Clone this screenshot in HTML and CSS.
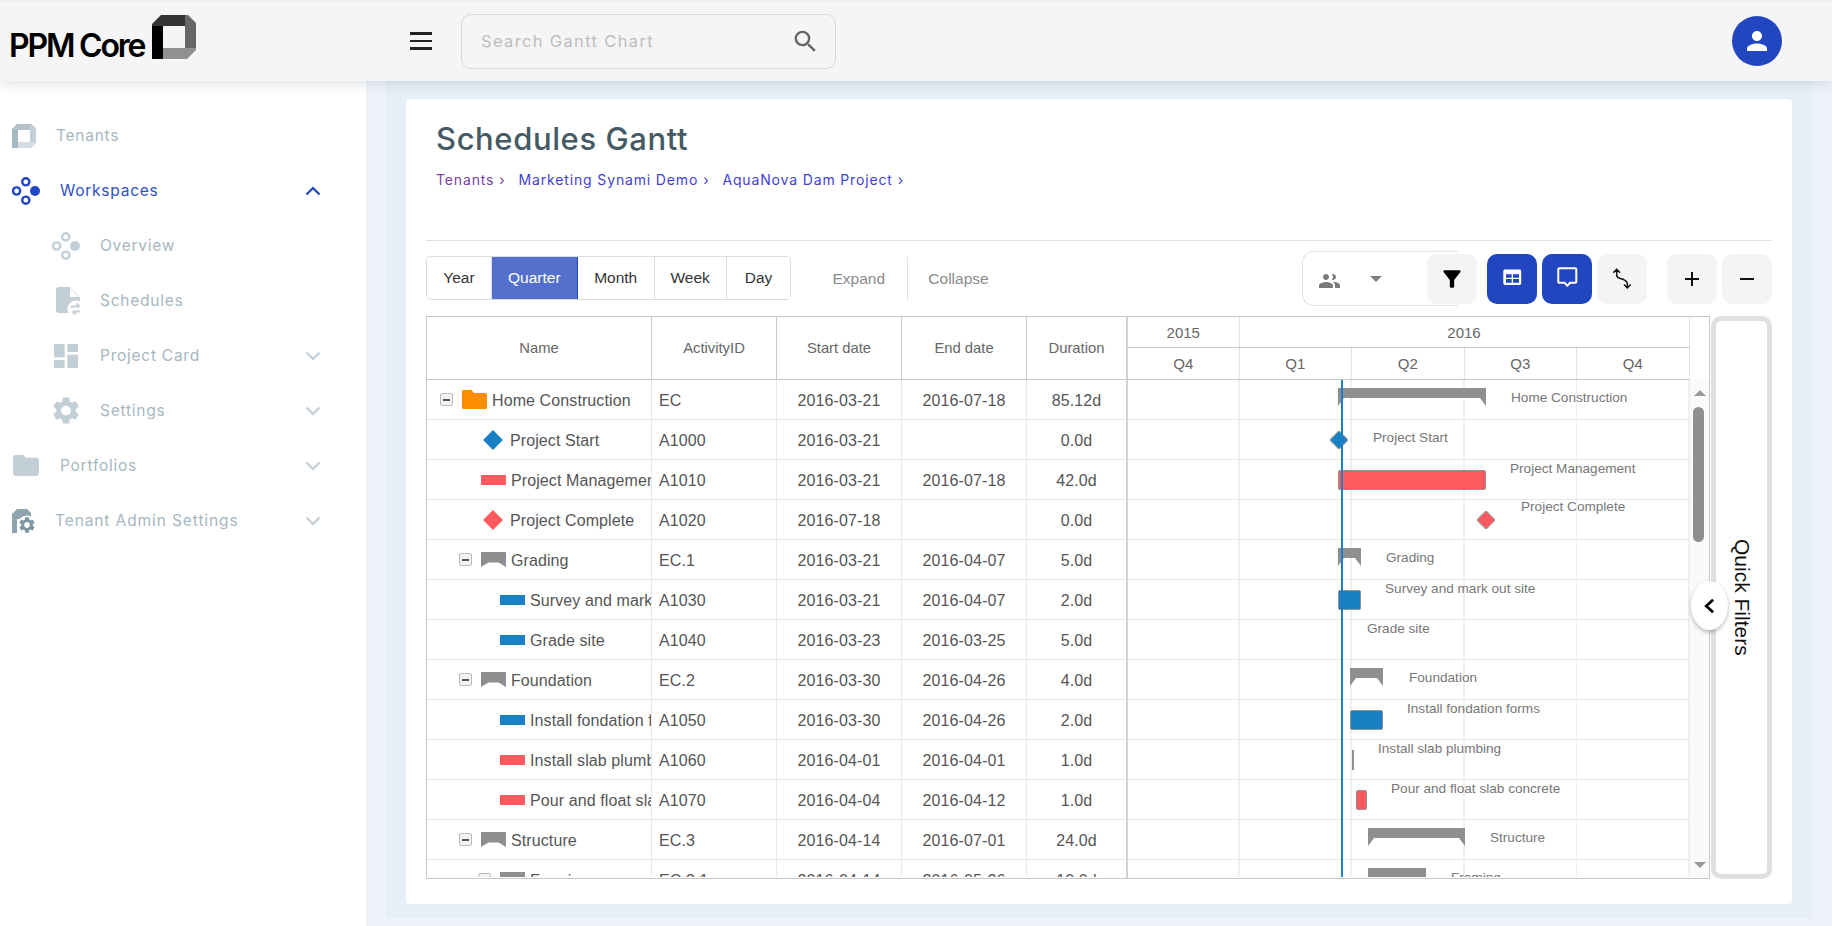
FILE: index.html
```html
<!DOCTYPE html>
<html lang="en">
<head>
<meta charset="UTF-8">
<meta name="viewport" content="width=device-width, initial-scale=1.0">
<title>Schedules Gantt</title>
<link rel="stylesheet" href="styles.css">
</head>
<body>
<header class="topbar">
  <a class="logo">
    <span class="logo-text">PPM Core</span>
    <svg class="logo-mark" viewBox="0 0 44 44">
      <polygon points="0,11 11,11 11,44 0,44" fill="#000"/>
      <polygon points="0,11 0,9 9,0 33,0 33,11" fill="#333"/>
      <polygon points="33,0 36,0 44,8 44,33 33,33" fill="#666"/>
      <polygon points="11,33 44,33 44,35 35,44 11,44" fill="#919191"/>
    </svg>
  </a>
  <button class="hamburger"><span></span><span></span><span></span></button>
  <div class="search">
    <span class="search-text">Search Gantt Chart</span>
    <svg class="search-icon" viewBox="0 0 24 24"><path d="M15.5 14h-.79l-.28-.27A6.471 6.471 0 0 0 16 9.5 6.5 6.5 0 1 0 9.5 16c1.61 0 3.09-.59 4.23-1.57l.27.28v.79l5 4.99L20.49 19l-4.99-5zm-6 0C7.01 14 5 11.99 5 9.5S7.01 5 9.5 5 14 7.01 14 9.5 11.99 14 9.5 14z"/></svg>
  </div>
  <div class="avatar">
    <svg viewBox="0 0 24 24"><path d="M12 12c2.21 0 4-1.79 4-4s-1.79-4-4-4-4 1.79-4 4 1.79 4 4 4zm0 2c-2.67 0-8 1.34-8 4v2h16v-2c0-2.66-5.33-4-8-4z"/></svg>
  </div>
</header>

<div class="layout">
  <aside class="sidebar">
    <div class="nav-item">
      <svg class="nav-icon ic-tenant" viewBox="0 0 44 44">
        <polygon points="0,11 11,11 11,44 0,44" fill="#a5b8c2"/>
        <polygon points="0,11 0,9 9,0 33,0 33,11" fill="#b3c2ca"/>
        <polygon points="33,0 36,0 44,8 44,33 33,33" fill="#c3cfd6"/>
        <polygon points="11,33 44,33 44,35 35,44 11,44" fill="#d4dde1"/>
      </svg>
      <span class="nav-label">Tenants</span>
    </div>
    <div class="nav-item active">
      <svg class="nav-icon ic-work" viewBox="0 0 28 28">
        <g fill="none" stroke="currentColor" stroke-width="2.4"><circle cx="13.8" cy="4.8" r="3.6"/><circle cx="4.6" cy="14" r="3.6"/><circle cx="13.8" cy="23.2" r="3.6"/></g>
        <circle cx="23" cy="14" r="5" fill="currentColor"/>
      </svg>
      <span class="nav-label">Workspaces</span>
      <svg class="chevron" viewBox="0 0 16 10"><path d="M1.5 8.5 8 2l6.5 6.5"/></svg>
    </div>
    <div class="nav-item sub">
      <svg class="nav-icon ic-work" viewBox="0 0 28 28">
        <g fill="none" stroke="currentColor" stroke-width="2.4"><circle cx="13.8" cy="4.8" r="3.6"/><circle cx="4.6" cy="14" r="3.6"/><circle cx="13.8" cy="23.2" r="3.6"/></g>
        <circle cx="23" cy="14" r="5" fill="currentColor"/>
      </svg>
      <span class="nav-label">Overview</span>
    </div>
    <div class="nav-item sub">
      <svg class="nav-icon ic-sched" viewBox="0 0 24 28">
        <path fill="currentColor" d="M13.5 0H3C1.4 0 0 1.3 0 3v20c0 1.7 1.3 3 3 3h18c1.7 0 3-1.3 3-3V10.5L13.5 0z"/>
        <polygon fill="#fff" points="14,1 14,10 23,10"/>
        <circle cx="20" cy="22" r="8.5" fill="#fff"/>
        <path fill="none" stroke="currentColor" stroke-width="1.8" d="M14.5 19.5h9M20.5 16.5l3 3M25.5 24.5h-9M19.5 27.5l-3-3"/>
      </svg>
      <span class="nav-label">Schedules</span>
    </div>
    <div class="nav-item sub">
      <svg class="nav-icon ic-card" viewBox="3 3 18 18"><path fill="currentColor" d="M3 13h8V3H3v10zm0 8h8v-6H3v6zm10 0h8V11h-8v10zm0-18v6h8V3h-8z"/></svg>
      <span class="nav-label">Project Card</span>
      <svg class="chevron" viewBox="0 0 16 10"><path d="M1.5 1.5 8 8l6.5-6.5"/></svg>
    </div>
    <div class="nav-item sub">
      <svg class="nav-icon ic-gear" viewBox="2.5 2 19 20"><path fill="currentColor" d="M19.14 12.94c.04-.3.06-.61.06-.94 0-.32-.02-.64-.07-.94l2.03-1.58c.18-.14.23-.41.12-.61l-1.92-3.32c-.12-.22-.37-.29-.59-.22l-2.39.96c-.5-.38-1.03-.7-1.62-.94l-.36-2.54c-.04-.24-.24-.41-.48-.41h-3.84c-.24 0-.43.17-.47.41l-.36 2.54c-.59.24-1.13.57-1.62.94l-2.39-.96c-.22-.08-.47 0-.59.22L2.74 8.87c-.12.21-.08.47.12.61l2.03 1.58c-.05.3-.09.63-.09.94s.02.64.07.94l-2.03 1.58c-.18.14-.23.41-.12.61l1.92 3.32c.12.22.37.29.59.22l2.39-.96c.5.38 1.03.7 1.62.94l.36 2.54c.05.24.24.41.48.41h3.84c.24 0 .44-.17.47-.41l.36-2.54c.59-.24 1.13-.56 1.62-.94l2.39.96c.22.08.47 0 .59-.22l1.92-3.32c.12-.22.07-.47-.12-.61l-2.01-1.58zM12 15.6c-1.98 0-3.6-1.62-3.6-3.6s1.62-3.6 3.6-3.6 3.6 1.62 3.6 3.6-1.62 3.6-3.6 3.6z"/></svg>
      <span class="nav-label">Settings</span>
      <svg class="chevron" viewBox="0 0 16 10"><path d="M1.5 1.5 8 8l6.5-6.5"/></svg>
    </div>
    <div class="nav-item">
      <svg class="nav-icon ic-folder" viewBox="2 4 20 16"><path fill="currentColor" d="M10 4H4c-1.1 0-1.99.9-1.99 2L2 18c0 1.1.9 2 2 2h16c1.1 0 2-.9 2-2V8c0-1.1-.9-2-2-2h-8l-2-2z"/></svg>
      <span class="nav-label">Portfolios</span>
      <svg class="chevron" viewBox="0 0 16 10"><path d="M1.5 1.5 8 8l6.5-6.5"/></svg>
    </div>
    <div class="nav-item">
      <svg class="nav-icon ic-admin" viewBox="0 0 24 24">
        <path fill="#8fa4af" d="M0 5 5 0h10l4 4v6H5v14H0z"/>
        <circle cx="15" cy="16" r="9.5" fill="#fff"/>
        <g transform="translate(5.4 6.4) scale(.8)"><path fill="#7f96a2" d="M19.14 12.94c.04-.3.06-.61.06-.94 0-.32-.02-.64-.07-.94l2.03-1.58c.18-.14.23-.41.12-.61l-1.92-3.32c-.12-.22-.37-.29-.59-.22l-2.39.96c-.5-.38-1.03-.7-1.62-.94l-.36-2.54c-.04-.24-.24-.41-.48-.41h-3.84c-.24 0-.43.17-.47.41l-.36 2.54c-.59.24-1.13.57-1.62.94l-2.39-.96c-.22-.08-.47 0-.59.22L2.74 8.87c-.12.21-.08.47.12.61l2.03 1.58c-.05.3-.09.63-.09.94s.02.64.07.94l-2.03 1.58c-.18.14-.23.41-.12.61l1.92 3.32c.12.22.37.29.59.22l2.39-.96c.5.38 1.03.7 1.62.94l.36 2.54c.05.24.24.41.48.41h3.84c.24 0 .44-.17.47-.41l.36-2.54c.59-.24 1.13-.56 1.62-.94l2.39.96c.22.08.47 0 .59-.22l1.92-3.32c.12-.22.07-.47-.12-.61l-2.01-1.58zM12 15.6c-1.98 0-3.6-1.62-3.6-3.6s1.62-3.6 3.6-3.6 3.6 1.62 3.6 3.6-1.62 3.6-3.6 3.6z"/></g>
      </svg>
      <span class="nav-label nav-admin">Tenant Admin Settings</span>
      <svg class="chevron" viewBox="0 0 16 10"><path d="M1.5 1.5 8 8l6.5-6.5"/></svg>
    </div>
  </aside>

  <main class="main">
    <div class="main-inner">
      <section class="card">
        <div class="page-head">
          <h1>Schedules Gantt</h1>
          <nav class="crumbs">
            <a class="first">Tenants<i>›</i></a>
            <a>Marketing Synami Demo<i>›</i></a>
            <a>AquaNova Dam Project<i>›</i></a>
          </nav>
        </div>

        <div class="toolbar">
          <div class="scales">
            <button class="s-year">Year</button>
            <button class="s-quarter on">Quarter</button>
            <button class="s-month">Month</button>
            <button class="s-week">Week</button>
            <button class="s-day">Day</button>
          </div>
          <button class="plain expand">Expand</button>
          <button class="plain collapse">Collapse</button>

          <div class="res-select">
            <svg class="people" viewBox="0 0 24 24"><path d="M16 11c1.66 0 2.99-1.34 2.99-3S17.66 5 16 5c-.4 0-.8.08-1.15.23.7.75 1.15 1.69 1.15 2.77s-.45 2.02-1.15 2.77c.35.15.75.23 1.15.23zm-7 0c1.66 0 3-1.34 3-3S10.66 5 9 5 6 6.34 6 8s1.34 3 3 3zm0 2c-2.33 0-7 1.17-7 3.5V19h14v-2.5C16 14.17 11.33 13 9 13zm8 0c-.29 0-.62.02-.97.05 1.16.84 1.97 1.97 1.97 3.45V19h5v-2.5c0-2.33-3.67-3.5-6-3.5z"/></svg>
            <span class="caret"></span>
          </div>
          <button class="tool filter">
            <svg viewBox="0 0 24 24"><path d="M4.25 5.61C6.27 8.2 10 13 10 13v6c0 .55.45 1 1 1h2c.55 0 1-.45 1-1v-6s3.72-4.8 5.74-7.39c.51-.66.04-1.61-.79-1.61H5.04c-.83 0-1.3.95-.79 1.61z"/></svg>
          </button>
          <button class="tool blue">
            <svg viewBox="0 0 24 24"><path fill-rule="evenodd" d="M5 2.5h14.5c1 0 1.7.7 1.7 1.7v12c0 1-.7 1.7-1.7 1.7H5c-1 0-1.7-.7-1.7-1.7v-12C3.3 3.2 4 2.5 5 2.500zM6 7.300v3.400h5.700V7.300H6zM13 7.300v3.400h6V7.300h-6zM6 12v3.700h5.700V12H6zM13 12v3.700h6V12h-6z"/></svg>
          </button>
          <button class="tool blue">
            <svg viewBox="0 0 24 24"><path fill="none" stroke="#fff" stroke-width="2" stroke-linejoin="round" d="M4.3 1.3h16c.6 0 1 .4 1 1v12.5c0 .6-.4 1-1 1h-5.500l-2.500 3-2.500-3H4.300c-.6 0-1-.4-1-1V2.300c0-.6.4-1 1-1z"/></svg>
          </button>
          <button class="tool link">
            <svg viewBox="0 0 24 24"><path fill="none" stroke="#111" stroke-width="1.5" d="M3.3 5.700 6.700 2.300l3.400 3.400M6.700 2.300V8c0 2 1.500 3 3.500 3.500 2 .3 3.500.8 5 2 1.300 1 2.100 1.500 2.100 2.500v4.900M14 17.500l3.300 3.400 3.400-3.400"/></svg>
          </button>
          <button class="tool plus">
            <svg viewBox="0 0 24 24"><path fill="none" stroke="#111" stroke-width="2" d="M12 5v14M5 12h14"/></svg>
          </button>
          <button class="tool minus">
            <svg viewBox="0 0 24 24"><path fill="none" stroke="#111" stroke-width="2" d="M5 12h14"/></svg>
          </button>
        </div>

        <div class="chart-wrap">
          <div class="gantt">
            <div class="grid-pane">
              <div class="g-row g-head">
                <div class="c c-name">Name</div>
                <div class="c c-id">ActivityID</div>
                <div class="c c-date">Start date</div>
                <div class="c c-date">End date</div>
                <div class="c c-dur">Duration</div>
              </div>
              <div class="g-body">
                <div class="g-row">
                  <div class="c c-name lv0"><span class="tog"><i></i></span><svg class="ic-f" viewBox="0 0 25 19"><path d="M1.5 0h8L12 3h11.500c.8 0 1.500.7 1.500 1.500v13c0 .8-.7 1.500-1.500 1.500h-22C.7 19 0 18.300 0 17.500v-16C0 .7.7 0 1.500 0z"/></svg><span class="t">Home Construction</span></div>
                  <div class="c c-id">EC</div><div class="c c-date">2016-03-21</div><div class="c c-date">2016-07-18</div><div class="c c-dur">85.12d</div>
                </div>
                <div class="g-row">
                  <div class="c c-name lv1"><span class="tog none"></span><span class="dia blue-d"></span><span class="t">Project Start</span></div>
                  <div class="c c-id">A1000</div><div class="c c-date">2016-03-21</div><div class="c c-date"></div><div class="c c-dur">0.0d</div>
                </div>
                <div class="g-row">
                  <div class="c c-name lv1"><span class="tog none"></span><span class="bar-i red-b"></span><span class="t">Project Management</span></div>
                  <div class="c c-id">A1010</div><div class="c c-date">2016-03-21</div><div class="c c-date">2016-07-18</div><div class="c c-dur">42.0d</div>
                </div>
                <div class="g-row">
                  <div class="c c-name lv1"><span class="tog none"></span><span class="dia red-d"></span><span class="t">Project Complete</span></div>
                  <div class="c c-id">A1020</div><div class="c c-date">2016-07-18</div><div class="c c-date"></div><div class="c c-dur">0.0d</div>
                </div>
                <div class="g-row">
                  <div class="c c-name lv1"><span class="tog"><i></i></span><span class="sum-i"></span><span class="t">Grading</span></div>
                  <div class="c c-id">EC.1</div><div class="c c-date">2016-03-21</div><div class="c c-date">2016-04-07</div><div class="c c-dur">5.0d</div>
                </div>
                <div class="g-row">
                  <div class="c c-name lv2"><span class="tog none"></span><span class="bar-i blue-b"></span><span class="t">Survey and mark out site</span></div>
                  <div class="c c-id">A1030</div><div class="c c-date">2016-03-21</div><div class="c c-date">2016-04-07</div><div class="c c-dur">2.0d</div>
                </div>
                <div class="g-row">
                  <div class="c c-name lv2"><span class="tog none"></span><span class="bar-i blue-b"></span><span class="t">Grade site</span></div>
                  <div class="c c-id">A1040</div><div class="c c-date">2016-03-23</div><div class="c c-date">2016-03-25</div><div class="c c-dur">5.0d</div>
                </div>
                <div class="g-row">
                  <div class="c c-name lv1"><span class="tog"><i></i></span><span class="sum-i"></span><span class="t">Foundation</span></div>
                  <div class="c c-id">EC.2</div><div class="c c-date">2016-03-30</div><div class="c c-date">2016-04-26</div><div class="c c-dur">4.0d</div>
                </div>
                <div class="g-row">
                  <div class="c c-name lv2"><span class="tog none"></span><span class="bar-i blue-b"></span><span class="t">Install fondation forms</span></div>
                  <div class="c c-id">A1050</div><div class="c c-date">2016-03-30</div><div class="c c-date">2016-04-26</div><div class="c c-dur">2.0d</div>
                </div>
                <div class="g-row">
                  <div class="c c-name lv2"><span class="tog none"></span><span class="bar-i red-b"></span><span class="t">Install slab plumbing</span></div>
                  <div class="c c-id">A1060</div><div class="c c-date">2016-04-01</div><div class="c c-date">2016-04-01</div><div class="c c-dur">1.0d</div>
                </div>
                <div class="g-row">
                  <div class="c c-name lv2"><span class="tog none"></span><span class="bar-i red-b"></span><span class="t">Pour and float slab concrete</span></div>
                  <div class="c c-id">A1070</div><div class="c c-date">2016-04-04</div><div class="c c-date">2016-04-12</div><div class="c c-dur">1.0d</div>
                </div>
                <div class="g-row">
                  <div class="c c-name lv1"><span class="tog"><i></i></span><span class="sum-i"></span><span class="t">Structure</span></div>
                  <div class="c c-id">EC.3</div><div class="c c-date">2016-04-14</div><div class="c c-date">2016-07-01</div><div class="c c-dur">24.0d</div>
                </div>
                <div class="g-row">
                  <div class="c c-name lv2"><span class="tog"><i></i></span><span class="sum-i"></span><span class="t">Framing</span></div>
                  <div class="c c-id">EC.3.1</div><div class="c c-date">2016-04-14</div><div class="c c-date">2016-05-26</div><div class="c c-dur">10.0d</div>
                </div>
              </div>
            </div>

            <div class="time-pane">
              <div class="t-head">
                <div class="t-years">
                  <div class="t-cell w-first">2015</div>
                  <div class="t-cell w-year">2016</div>
                </div>
                <div class="t-quarters">
                  <div class="t-cell w-first">Q4</div>
                  <div class="t-cell w-q">Q1</div>
                  <div class="t-cell w-q">Q2</div>
                  <div class="t-cell w-q">Q3</div>
                  <div class="t-cell w-q">Q4</div>
                </div>
              </div>
              <div class="t-body">
                <div class="canvas">
                  <div class="sum" style="left:210px;top:8px;width:148px"></div>
                  <div class="ms blue-d" style="left:201px;top:50px"></div>
                  <div class="task red-b" style="left:210px;top:90px;width:148px"></div>
                  <div class="ms red-d" style="left:348px;top:130px"></div>
                  <div class="sum" style="left:210px;top:168px;width:23px"></div>
                  <div class="task blue-b" style="left:210px;top:210px;width:23px"></div>
                  <div class="sum" style="left:222px;top:288px;width:33px"></div>
                  <div class="task blue-b" style="left:222px;top:330px;width:33px"></div>
                  <div class="task zero" style="left:224px;top:370px;width:2px"></div>
                  <div class="task red-b" style="left:228px;top:410px;width:11px"></div>
                  <div class="sum" style="left:240px;top:448px;width:97px"></div>
                  <div class="sum" style="left:240px;top:488px;width:58px"></div>

                  <div class="today"></div>

                  <span class="lbl" style="left:383px;top:9px">Home Construction</span>
                  <span class="lbl" style="left:245px;top:49px">Project Start</span>
                  <span class="lbl" style="left:382px;top:80px">Project Management</span>
                  <span class="lbl" style="left:393px;top:118px">Project Complete</span>
                  <span class="lbl" style="left:258px;top:169px">Grading</span>
                  <span class="lbl" style="left:257px;top:200px">Survey and mark out site</span>
                  <span class="lbl" style="left:239px;top:240px">Grade site</span>
                  <span class="lbl" style="left:281px;top:289px">Foundation</span>
                  <span class="lbl" style="left:279px;top:320px">Install fondation forms</span>
                  <span class="lbl" style="left:250px;top:360px">Install slab plumbing</span>
                  <span class="lbl" style="left:263px;top:400px">Pour and float slab concrete</span>
                  <span class="lbl" style="left:362px;top:449px">Structure</span>
                  <span class="lbl" style="left:323px;top:489px">Framing</span>
                </div>
                <div class="vscroll">
                  <span class="arr up"></span>
                  <span class="thumb"></span>
                  <span class="arr down"></span>
                </div>
              </div>
            </div>
          </div>

          <div class="quick"><span>Quick Filters</span></div>
          <button class="collapse-btn">
            <svg viewBox="0 0 16 16"><path fill="none" stroke="#000" stroke-width="2.2" d="M10.5 3 5 8l5.5 5"/></svg>
          </button>
        </div>
      </section>
    </div>
  </main>
</div>
</body>
</html>
```

FILE: styles.css
```css
* {
  box-sizing: border-box;
}

body, html {
  height: 100%;
  margin: 0;
  overflow: hidden;
}

body {
  display: flex;
  flex-direction: column;
  font-family: "Inter", "Liberation Sans", sans-serif;
  background: #fff;
}

button {
  font: inherit;
  border: 0;
  background: none;
  padding: 0;
  cursor: pointer;
}

/* top bar */
.topbar {
  height: 81px;
  flex: none;
  display: flex;
  align-items: center;
  background: #f5f5f5;
  border-top: 1px solid #eee;
  box-shadow: 0 2px 12px rgba(60, 80, 100, 0.18);
  position: relative;
  z-index: 5;
}

.logo {
  width: 410px;
  padding-left: 9px;
  display: flex;
  align-items: flex-start;
  align-self: flex-start;
}

.logo-text {
  font-size: 32px;
  font-weight: 600;
  color: #000;
  letter-spacing: -2.2px;
  line-height: 38px;
  margin-top: 26px;
  width: 143px;
}

.logo-mark {
  width: 44px;
  height: 44px;
  margin-top: 14px;
}

.hamburger {
  width: 22px;
  display: flex;
  flex-direction: column;
  gap: 5px;
  margin-right: 29px;
}

.hamburger span {
  height: 2.5px;
  background: #222;
}

.search {
  width: 375px;
  height: 55px;
  border: 1px solid #d3d8dc;
  border-radius: 10px;
  display: flex;
  align-items: center;
  justify-content: space-between;
  padding: 0 15px 0 19px;
}

.search-text {
  font-size: 16.5px;
  color: #bdbdbd;
  letter-spacing: 1.35px;
}

.search-icon {
  width: 29px;
  height: 29px;
  fill: #666;
}

.avatar {
  width: 50px;
  height: 50px;
  border-radius: 50%;
  background: #2146c0;
  margin-left: auto;
  margin-right: 50px;
  display: flex;
  align-items: center;
  justify-content: center;
}

.avatar svg {
  width: 30px;
  height: 30px;
  fill: #fff;
}

/* side nav */
.layout {
  flex: 1;
  display: flex;
  min-height: 0;
}

.sidebar {
  width: 366px;
  flex: none;
  background: #fff;
  padding-top: 27px;
}

.nav-item {
  height: 55px;
  display: flex;
  align-items: center;
  padding-left: 12px;
  color: #c3cfd6;
  position: relative;
}

.nav-item.sub {
  padding-left: 52px;
}

.nav-item.active {
  color: #2146c0;
}

.nav-label {
  font-size: 15.5px;
  color: #a6b7c1;
  letter-spacing: 0.75px;
  margin-left: 20px;
}

.active .nav-label {
  color: #2f51c6;
}

.nav-admin {
  margin-left: 19px;
  letter-spacing: 0.9px;
}

.nav-icon {
  flex: none;
}

.ic-tenant {
  width: 24px;
  height: 24px;
}

.ic-work {
  width: 28px;
  height: 28px;
}

.ic-sched {
  width: 24px;
  height: 28px;
  margin-left: 4px;
}

.ic-card {
  width: 24px;
  height: 24px;
  margin-left: 2px;
  margin-right: 2px;
}

.ic-gear {
  width: 26px;
  height: 27px;
  margin-left: 1px;
  margin-right: 1px;
}

.ic-folder {
  width: 26px;
  height: 21px;
  margin-left: 1px;
  margin-right: 1px;
}

.ic-admin {
  width: 24px;
  height: 24px;
}

.chevron {
  position: absolute;
  left: 305px;
  top: 23px;
  width: 16px;
  height: 10px;
  fill: none;
  stroke: #c3cfd6;
  stroke-width: 2.2;
}

.active .chevron {
  stroke: #2146c0;
}

/* page area */
.main {
  flex: 1;
  min-width: 0;
  background: #eef3f9;
  padding: 0 20px 8px;
  display: flex;
}

.main-inner {
  flex: 1;
  min-width: 0;
  background: #e6eff8;
  padding: 18px 20px 14px;
  display: flex;
}

.card {
  flex: 1;
  min-width: 0;
  background: #fff;
  border-radius: 4px;
  padding: 0 20px;
}

.page-head {
  padding: 22px 0 50px 10px;
  border-bottom: 1px solid #e0e0e0;
}

.page-head h1 {
  margin: 0;
  font-size: 31px;
  font-weight: 500;
  line-height: 36px;
  color: #455a64;
  letter-spacing: 0.6px;
}

.crumbs {
  margin-top: 13px;
  height: 20px;
  display: flex;
  gap: 13px;
  font-size: 14px;
  line-height: 20px;
  letter-spacing: 0.85px;
  color: #3f3fd8;
}

.crumbs .first {
  color: #7a44a8;
}

.crumbs i {
  font-style: normal;
  margin-left: 5px;
}

/* toolbar */
.toolbar {
  margin-top: 10px;
  height: 55px;
  display: flex;
  align-items: center;
}

.scales {
  display: flex;
  height: 44px;
  border: 1px solid #dcdcdc;
  border-radius: 5px;
  overflow: hidden;
  margin-top: -1px;
}

.scales button {
  font-family: "Liberation Sans", Arial, sans-serif;
  font-size: 15.5px;
  color: #333;
  border-right: 1px solid #dcdcdc;
  background: #fff;
}

.scales button:last-child {
  border-right: 0;
}

.scales .on {
  background: #5470cd;
  color: #fff;
  border-right-color: #2146c0;
}

.s-year { width: 65px; }
.s-quarter { width: 86px; }
.s-month { width: 77px; }
.s-week { width: 72px; }
.s-day { width: 64px; }

.plain {
  font-family: "Liberation Sans", Arial, sans-serif;
  font-size: 15.5px;
  color: #8a8a8a;
  height: 44px;
  text-align: left;
}

.expand {
  width: 117px;
  padding-left: 41px;
  border-right: 1px solid #e4e4e4;
}

.collapse {
  width: 83px;
  padding-left: 20px;
}

.res-select {
  width: 156px;
  height: 55px;
  margin-left: 311px;
  border: 1px solid #e2e2e2;
  border-right: 0;
  border-radius: 12px 0 0 12px;
  display: flex;
  align-items: center;
  padding-left: 14px;
}

.people {
  width: 24px;
  height: 24px;
  fill: #7a7a7a;
  margin-top: 4px;
}

.caret {
  margin-left: 29px;
  border-left: 6px solid transparent;
  border-right: 6px solid transparent;
  border-top: 6px solid #808080;
}

.tool {
  width: 50px;
  height: 50px;
  border-radius: 10px;
  background: #f4f4f4;
  display: flex;
  align-items: center;
  justify-content: center;
  flex: none;
  margin-left: 5px;
}

.tool svg {
  width: 24px;
  height: 24px;
}

.tool.filter {
  margin-left: -31px;
  position: relative;
}

.tool.filter svg {
  fill: #000;
  width: 26px;
  height: 26px;
}

.tool.blue {
  background: #2146c0;
  fill: #fff;
}

.tool.filter + .tool.blue {
  margin-left: 10px;
}

.tool.plus {
  margin-left: 20px;
}

/* gantt */
.chart-wrap {
  margin-top: 10px;
  height: 563px;
  display: flex;
  gap: 1px;
  position: relative;
}

.gantt {
  width: 1284px;
  flex: none;
  height: 100%;
  border: 1px solid #c8c8c8;
  display: flex;
  font-family: "Liberation Sans", Arial, sans-serif;
  overflow: hidden;
}

.grid-pane {
  width: 701px;
  flex: none;
  border-right: 2px solid #d2d2d2;
  display: flex;
  flex-direction: column;
}

.g-row {
  display: flex;
  height: 40px;
  flex: none;
  border-bottom: 1px solid #e8e8e8;
}

.g-row.g-head {
  height: 63px;
  border-bottom: 1px solid #c8c8c8;
  font-size: 14.8px;
  color: #666;
}

.g-body {
  flex: 1;
  overflow: hidden;
  font-size: 16px;
  letter-spacing: 0.1px;
  color: #555;
  margin-bottom: 1px;
}

.c {
  display: flex;
  align-items: center;
  justify-content: center;
  border-right: 1px solid #e8e8e8;
  overflow: hidden;
  white-space: nowrap;
}

.g-body .c {
  padding-top: 2px;
}

.g-head .c {
  border-right-color: #c8c8c8;
}

.c:last-child {
  border-right: 0;
}

.c-name { width: 225px; }
.c-id { width: 125px; }
.c-date { width: 125px; }
.c-dur { width: 99px; }

.g-body .c-name {
  justify-content: flex-start;
  padding-top: 0;
}

.g-body .c-id {
  justify-content: flex-start;
  padding-left: 7px;
}

.lv0 { padding-left: 13px; }
.lv1 { padding-left: 32px; }
.lv2 { padding-left: 51px; }

.tog {
  width: 13px;
  height: 13px;
  margin-right: 9px;
  flex: none;
  border: 1px solid #bbb;
  border-radius: 2px;
  background: #f2f2f2;
  display: flex;
  align-items: center;
  justify-content: center;
}

.tog i {
  width: 7px;
  height: 2px;
  background: #555;
}

.tog.none {
  visibility: hidden;
}

.ic-f {
  width: 25px;
  height: 19px;
  flex: none;
  fill: #ff8c00;
  margin-right: 5px;
}

.dia {
  width: 14px;
  height: 14px;
  margin: 0 10px 0 5px;
  flex: none;
  transform: rotate(45deg);
}

.bar-i {
  width: 25px;
  height: 10px;
  margin-right: 5px;
  flex: none;
}

.sum-i {
  width: 25px;
  height: 15px;
  margin-right: 5px;
  flex: none;
  background: #8f8f8f;
  clip-path: polygon(0 0, 100% 0, 100% 100%, 70% 70%, 30% 70%, 0 100%);
}

.t {
  flex: none;
  padding-top: 2px;
}

.blue-d, .blue-b { background: #1a80c4; }
.red-d, .red-b { background: #ff5a5f; }

.time-pane {
  flex: 1;
  min-width: 0;
  display: flex;
  flex-direction: column;
}

.t-head {
  height: 63px;
  flex: none;
  font-size: 15px;
  color: #666;
}

.t-years, .t-quarters {
  display: flex;
  width: 562px;
  border-bottom: 1px solid #c8c8c8;
}

.t-years {
  height: 31px;
}

.t-quarters {
  height: 32px;
}

.t-cell {
  display: flex;
  align-items: center;
  justify-content: center;
  border-right: 1px solid #e2e2e2;
  flex: none;
}

.w-first { width: 111.5px; }
.w-year { width: 450px; }
.w-q { width: 112.5px; }

.t-body {
  flex: 1;
  min-height: 0;
  display: flex;
  margin-bottom: 1px;
}

.canvas {
  width: 562px;
  flex: none;
  position: relative;
  overflow: hidden;
  background-image:
    repeating-linear-gradient(to bottom, transparent 0 39px, #e8e8e8 39px 40px),
    repeating-linear-gradient(to right, transparent 0 110px, #f0f0f0 110px 112px, transparent 112px 112.5px);
}

.sum {
  position: absolute;
  height: 18px;
  background: #8f8f8f;
  clip-path: polygon(0 0, 100% 0, 100% 100%, calc(100% - 6px) 10px, 6px 10px, 0 100%);
}

.task {
  position: absolute;
  height: 20px;
  border: 1px solid #8f8f8f;
  border-radius: 2px;
}

.task.zero {
  background: #8f8f8f;
  border: 0;
  border-radius: 0;
}

.ms {
  position: absolute;
  width: 14px;
  height: 14px;
  margin: 2.5px;
  border: 1px solid #999;
  border-radius: 2px;
  transform: rotate(45deg);
}

.today {
  position: absolute;
  left: 213px;
  top: 0;
  bottom: 0;
  width: 2px;
  background: #1a7fc4;
}

.lbl {
  position: absolute;
  margin-top: 1px;
  font-size: 13.6px;
  line-height: 16px;
  color: #777;
  white-space: nowrap;
}

.vscroll {
  flex: 1;
  background: #fafafa;
  position: relative;
  margin-top: -1px;
}

.arr {
  position: absolute;
  left: 4px;
  border-left: 6px solid transparent;
  border-right: 6px solid transparent;
}

.arr.up {
  top: 11px;
  border-bottom: 6px solid #999;
}

.arr.down {
  bottom: 9px;
  border-top: 6px solid #999;
}

.thumb {
  position: absolute;
  left: 3px;
  top: 28px;
  width: 11px;
  height: 135px;
  border-radius: 6px;
  background: #8f8f8f;
}

.quick {
  width: 61px;
  flex: none;
  height: 100%;
  border: 5px solid #e0e0e0;
  border-radius: 10px;
  display: flex;
  align-items: center;
  justify-content: center;
  font-family: "Liberation Sans", Arial, sans-serif;
  font-size: 21px;
  color: #111;
}

.quick span {
  writing-mode: vertical-rl;
}

.collapse-btn {
  position: absolute;
  left: 1265px;
  top: 265px;
  width: 37px;
  height: 49px;
  border-radius: 50%;
  background: #fff;
  box-shadow: 0 2px 4px rgba(0, 0, 0, 0.28);
  display: flex;
  align-items: center;
  justify-content: center;
}

.collapse-btn svg {
  width: 20px;
  height: 20px;
}
```
